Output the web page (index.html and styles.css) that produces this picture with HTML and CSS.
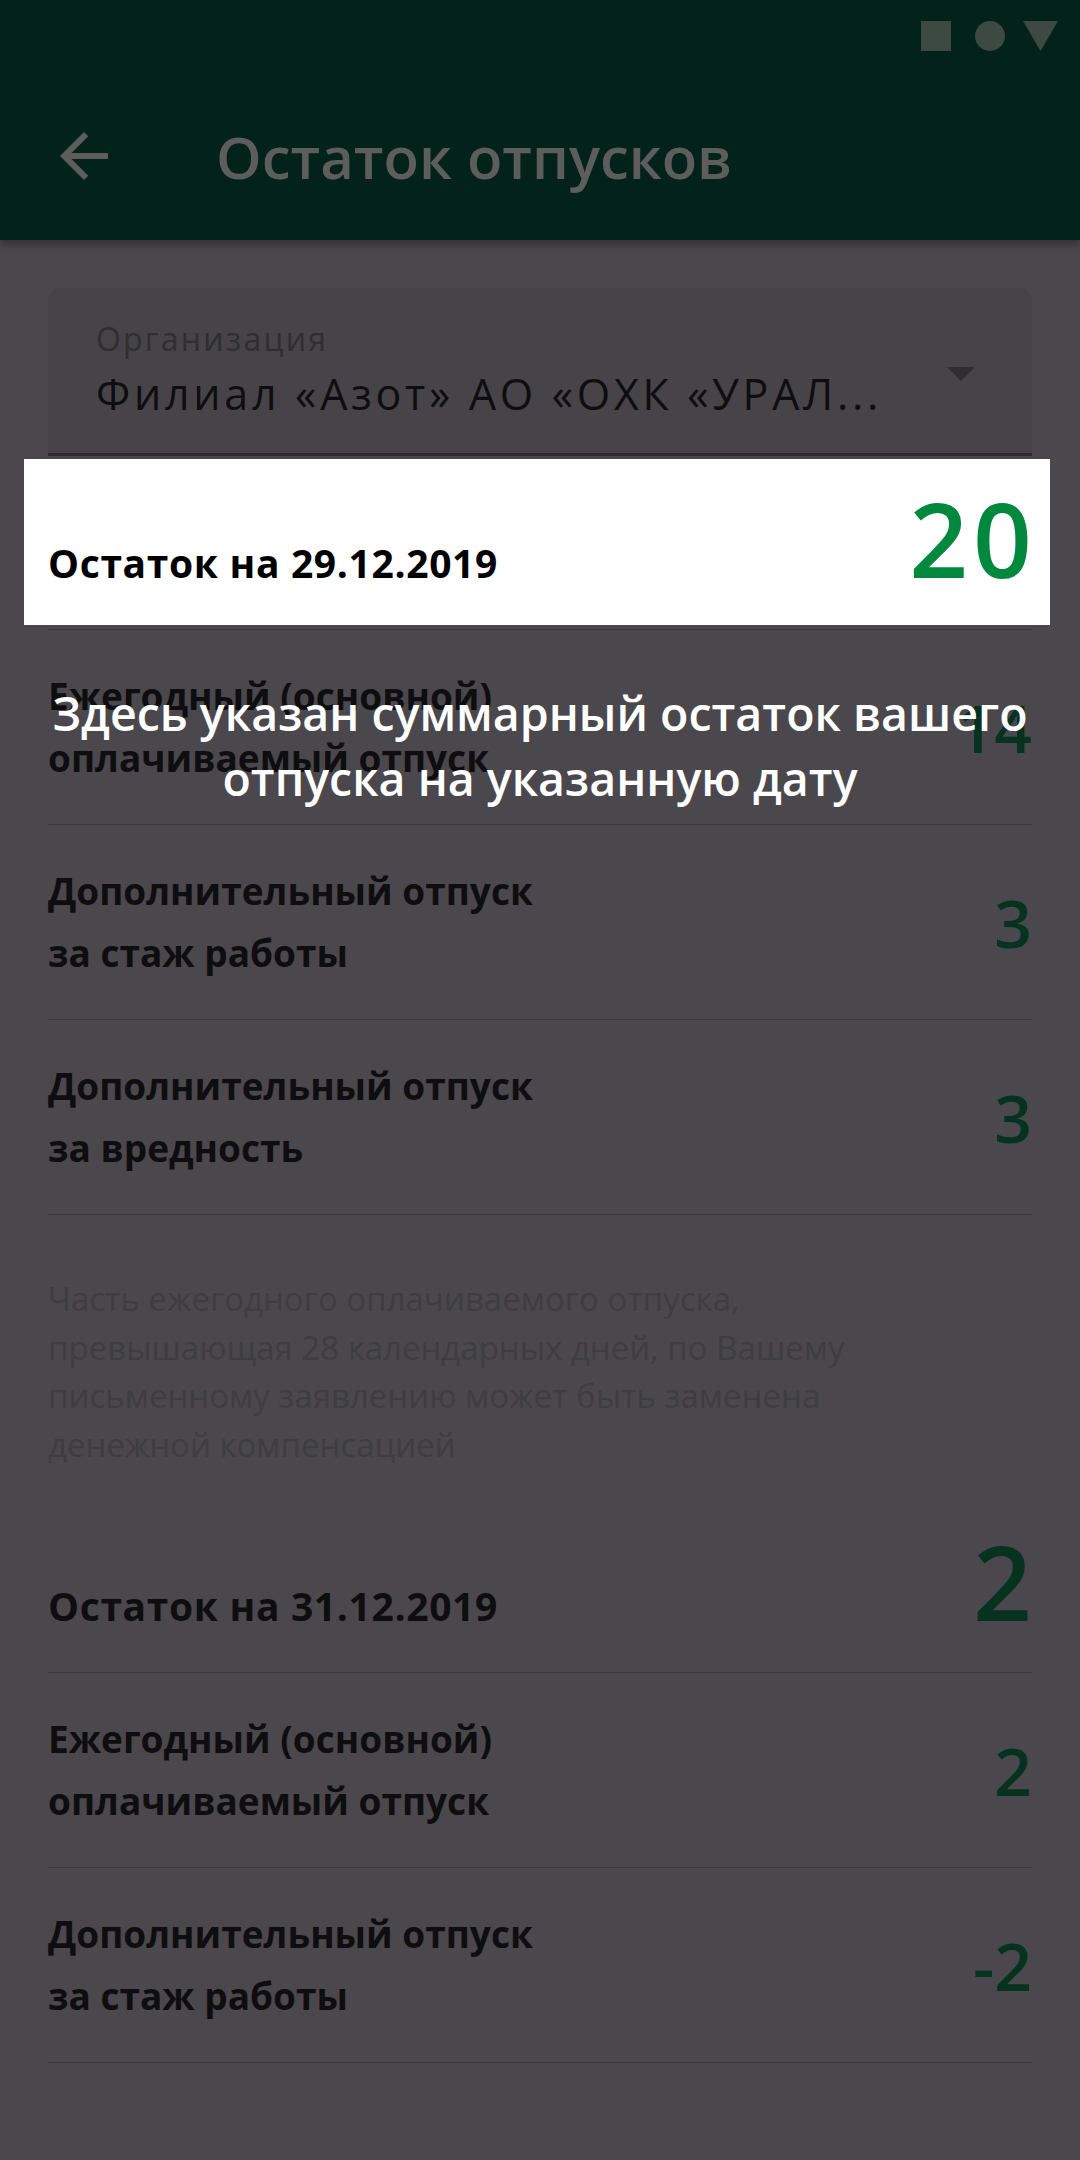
FILE: index.html
```html
<!DOCTYPE html>
<html lang="ru">
<head>
<meta charset="utf-8">
<link rel="stylesheet" href="styles.css">
</head>
<body>
<div class="screen">
  <header class="topbar">
    <div class="statusbar">
      <span class="st-square"></span>
      <span class="st-circle"></span>
      <svg class="st-tri" viewBox="0 0 35 30"><polygon points="0,0 35,0 17.5,30"/></svg>
    </div>
    <div class="toolbar">
      <svg class="back" viewBox="0 0 24 24"><path d="M20 11H7.83l5.59-5.59L12 4l-8 8 8 8 1.41-1.41L7.83 13H20v-2z"/></svg>
      <h1 class="title">Остаток отпусков</h1>
    </div>
  </header>

  <main class="content">
    <div class="select">
      <div class="select-text">
        <div class="select-label">Организация</div>
        <div class="select-value">Филиал «Азот» АО «ОХК «УРАЛ...</div>
      </div>
      <svg class="select-arrow" viewBox="0 0 28 14"><polygon points="0,0 28,0 14,14"/></svg>
    </div>

    <section class="group">
      <div class="head spot">
        <span class="head-label">Остаток на 29.12.2019</span>
        <span class="head-num">20</span>
      </div>
      <div class="row">
        <span class="row-label">Ежегодный (основной)<br>оплачиваемый отпуск</span>
        <span class="row-num">14</span>
      </div>
      <div class="row">
        <span class="row-label">Дополнительный отпуск<br>за стаж работы</span>
        <span class="row-num">3</span>
      </div>
      <div class="row">
        <span class="row-label">Дополнительный отпуск<br>за вредность</span>
        <span class="row-num">3</span>
      </div>
    </section>

    <p class="note">Часть ежегодного оплачиваемого отпуска,<br>превышающая 28 календарных дней, по Вашему<br>письменному заявлению может быть заменена<br>денежной компенсацией</p>

    <section class="group">
      <div class="head">
        <span class="head-label">Остаток на 31.12.2019</span>
        <span class="head-num">2</span>
      </div>
      <div class="row">
        <span class="row-label">Ежегодный (основной)<br>оплачиваемый отпуск</span>
        <span class="row-num">2</span>
      </div>
      <div class="row">
        <span class="row-label">Дополнительный отпуск<br>за стаж работы</span>
        <span class="row-num">-2</span>
      </div>
    </section>
  </main>

  <div class="hint">Здесь указан суммарный остаток вашего<br>отпуска на указанную дату</div>
</div>
</body>
</html>
```

FILE: styles.css
```css
* { box-sizing: border-box; }
html, body { margin: 0; padding: 0; }
body {
  background: #4a484c;
  font-family: "Open Sans", "Noto Sans", sans-serif;
  color: #0f0f11;
}
.screen {
  position: relative;
  width: 1080px;
  min-height: 2160px;
  background: #4a484c;
}
.topbar {
  background: #03221a;
  box-shadow: 0 4px 8px rgba(0,0,0,0.35);
  position: relative;
}
.statusbar {
  height: 72px;
  display: flex;
  align-items: center;
  justify-content: flex-end;
  gap: 24px;
  padding-right: 22px;
}
.st-square { width: 30px; height: 30px; background: #3d4a43; }
.st-circle { width: 30px; height: 30px; border-radius: 50%; background: #3d4a43; }
.st-tri { width: 35px; height: 30px; fill: #3d4a43; margin-left: -6px; }
.toolbar {
  height: 168px;
  display: flex;
  align-items: center;
  padding-left: 48px;
}
.back { width: 72px; height: 72px; fill: #5d5e5c; }
.title {
  margin: 0 0 0 96px;
  font-size: 58px;
  font-weight: 600;
  color: #5d5e5c;
}
.content { padding: 48px 48px 0; }
.select {
  height: 168px;
  background: #464448;
  border-radius: 12px 12px 0 0;
  border-bottom: 3px solid #2c2b2e;
  display: flex;
  align-items: flex-start;
  padding: 29px 57px 0 48px;
}
.select-text { flex: 1; white-space: nowrap; }
.select-label {
  font-size: 32px;
  line-height: 44px;
  letter-spacing: 2.2px;
  color: #2f2e31;
}
.select-value {
  font-size: 43px;
  line-height: 66px;
  letter-spacing: 3.7px;
  color: #0e0e10;
}
.select-arrow {
  align-self: center;
  flex: none;
  width: 28px; height: 14px;
  fill: #2e2d30;
  margin-top: -22px;
}
.head {
  display: flex;
  justify-content: space-between;
  align-items: baseline;
  padding: 31px 0 39px;
  border-bottom: 1px solid #39383b;
  position: relative;
}
.head-label { font-size: 39px; font-weight: 700; letter-spacing: 0.65px; color: #0e0e10; }
.head-num {
  font-size: 103px;
  line-height: 1;
  font-weight: 600;
  letter-spacing: 5px;
  margin-right: -5px;
  color: #06321f;
}
.spot { z-index: 2; }
.spot::before {
  content: "";
  position: absolute;
  left: -24px; right: -18px; top: 3px; bottom: 4px;
  background: #ffffff;
  z-index: -1;
}
.spot .head-label { color: #000; }
.spot .head-num { color: #00883f; }
.row {
  display: flex;
  justify-content: space-between;
  align-items: center;
  padding: 35px 0;
  border-bottom: 1px solid #39383b;
}
.row-label { font-size: 37px; line-height: 62px; font-weight: 700; color: #0e0e10; }
.row-num { font-size: 66px; line-height: 1; font-weight: 600; color: #06321f; }
.note {
  margin: 60px 0 30px;
  font-size: 33px;
  line-height: 48.5px;
  color: #3e3d41;
  font-weight: 400;
}
.hint {
  position: absolute;
  left: 0; right: 0; top: 681px;
  text-align: center;
  color: #ffffff;
  font-size: 46.5px;
  line-height: 65px;
  font-weight: 600;
}
```
